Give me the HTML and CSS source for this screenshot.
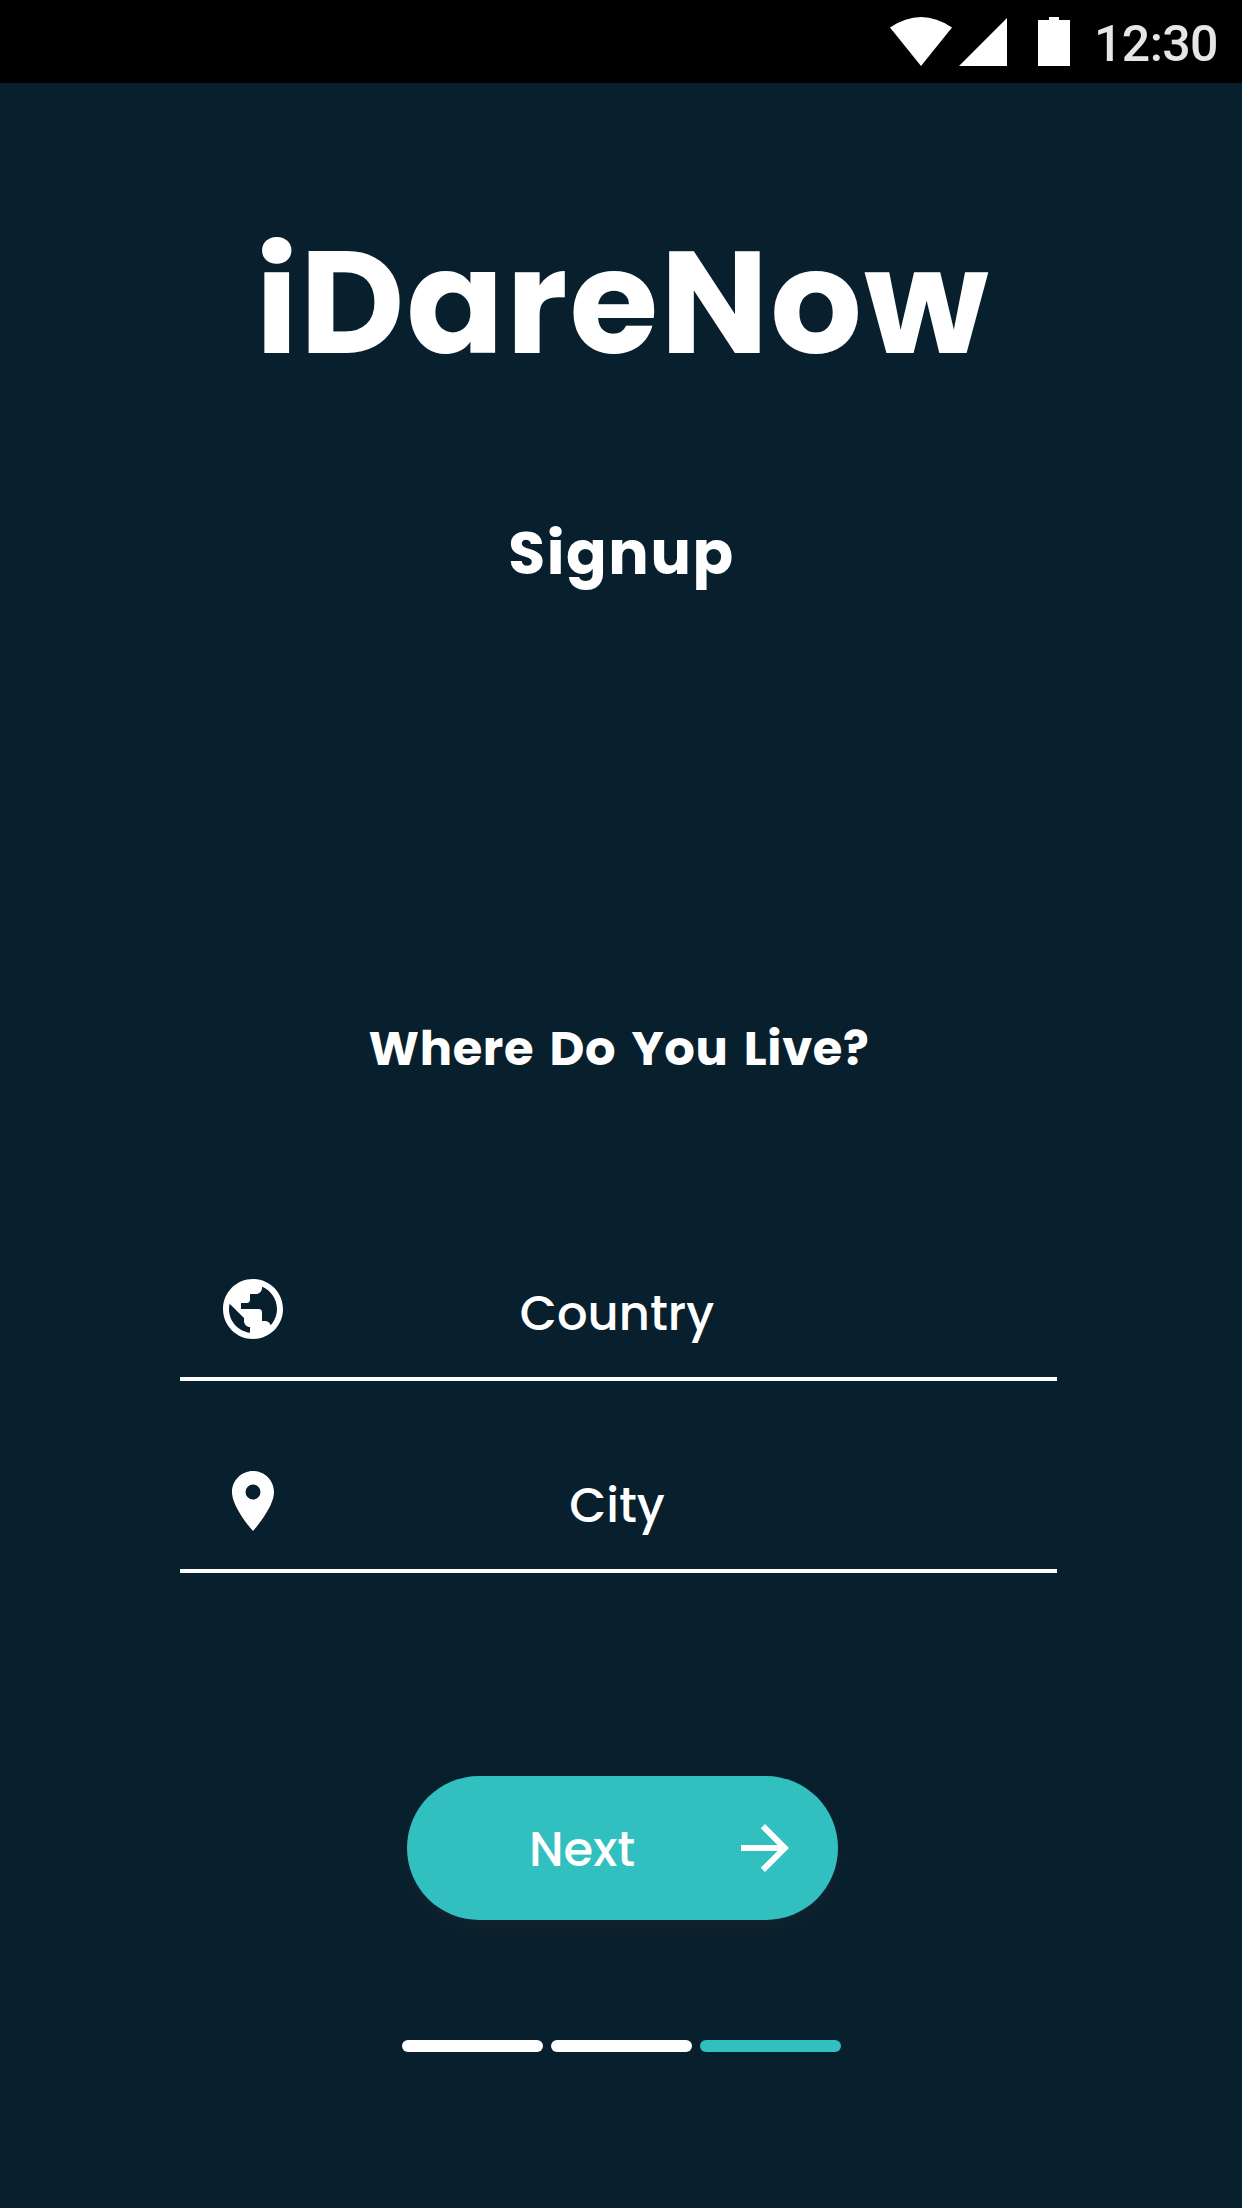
FILE: index.html
```
<!DOCTYPE html>
<html lang="en">
<head>
<meta charset="utf-8">
<title>iDareNow – Signup</title>
<link rel="stylesheet" href="styles.css">
</head>
<body>
<header class="status">
  <svg class="wifi" viewBox="0 0 62 49"><path d="M0 10.5Q31-10.5 62 10.5L31 49Z"/></svg>
  <svg class="signal" viewBox="0 0 48 48"><path d="M48 0V48H0Z"/></svg>
  <svg class="battery" viewBox="0 0 32 49"><path d="M11 0h10v3h11v46H0V3h11Z"/></svg>
  <span class="time">12:30</span>
</header>
<main class="screen">
  <h1 class="brand">iDareNow</h1>
  <h2 class="heading">Signup</h2>
  <h3 class="question">Where Do You Live?</h3>
  <form class="fields">
    <div class="field">
      <svg class="icon" viewBox="0 0 24 24"><path d="M12 2C6.48 2 2 6.48 2 12s4.480 10 10 10 10-4.480 10-10S17.520 2 12 2zm-1 17.930c-3.950-.49-7-3.850-7-7.930 0-.62.080-1.210.210-1.790L9 15v1c0 1.100.9 2 2 2v1.930zm6.900-2.540c-.26-.81-1-1.390-1.900-1.390h-1v-3c0-.55-.45-1-1-1H8v-2h2c.55 0 1-.45 1-1V7h2c1.100 0 2-.9 2-2v-.41c2.930 1.190 5 4.060 5 7.410 0 2.080-.8 3.970-2.100 5.390z"/></svg>
      <span class="label">Country</span>
    </div>
    <div class="field">
      <svg class="icon" viewBox="0 0 24 24"><path d="M12 2C8.130 2 5 5.130 5 9c0 5.250 7 13 7 13s7-7.750 7-13c0-3.870-3.130-7-7-7zm0 9.500a2.500 2.500 0 1 1 0-5 2.500 2.500 0 0 1 0 5z"/></svg>
      <span class="label">City</span>
    </div>
  </form>
  <button class="next" type="button">
    <span class="next-label">Next</span>
    <svg class="arrow" viewBox="0 0 24 24"><path d="M12 4l-1.410 1.410L16.170 11H4v2h12.170l-5.580 5.590L12 20l8-8z"/></svg>
  </button>
  <div class="steps"><i class="step"></i><i class="step"></i><i class="step active"></i></div>
</main>
</body>
</html>
```
FILE: styles.css
```
* { box-sizing: border-box; }
body {
  margin: 0;
  width: 1242px;
  height: 2208px;
  background: #08202d;
  color: #fff;
  font-family: Poppins, Inter, "Open Sans", sans-serif;
  overflow: hidden;
}
svg { display: block; fill: currentColor; flex: none; }
.status {
  height: 83px;
  padding: 17px 24px 0 0;
  background: #000;
  display: flex;
  justify-content: flex-end;
  align-items: flex-start;
}
.wifi { width: 62px; height: 49px; margin-right: 7px; }
.signal { width: 48px; height: 48px; margin: 1px 31px 0 0; }
.battery { width: 32px; height: 49px; margin-right: 24px; }
.time {
  width: 124px;
  color: #e6e6e6;
  font: 500 50px/54px Roboto, sans-serif;
  letter-spacing: -.6px;
  white-space: nowrap;
}
.screen { display: flex; flex-direction: column; align-items: center; }
h1, h2, h3 { margin: 0; white-space: nowrap; }
.brand { margin: 130px 0 0 4px; font-size: 144px; line-height: 180px; font-weight: 700; letter-spacing: 1.9px; }
.heading { margin: 115px 0 0 1px; font-size: 60px; line-height: 90px; font-weight: 700; letter-spacing: 1.6px; }
.question { margin: 416px 4px 0 0; font-size: 48px; line-height: 70px; font-weight: 700; letter-spacing: .6px; word-spacing: 4.6px; }
.fields { width: 877px; margin: 189px 5px 0 0; display: flex; flex-direction: column; gap: 84px; }
.field {
  height: 108px;
  display: grid;
  grid-template-columns: 72px 1fr 76px;
  padding: 0 36px 0 37px;
  border-bottom: 4px solid #fff;
}
.icon { width: 72px; height: 72px; }
.label { font-size: 48px; line-height: 81px; font-weight: 500; text-align: center; white-space: nowrap; }
.next {
  width: 431px;
  height: 144px;
  margin: 203px 0 0 3px;
  padding: 0 37px 0 122px;
  border: 0;
  border-radius: 72px;
  background: #32bfc0;
  color: #fff;
  font: inherit;
  display: flex;
  align-items: center;
  justify-content: space-between;
  box-shadow: 0 9px 18px rgba(60, 50, 50, .16);
}
.next-label { font-size: 48px; line-height: 70px; font-weight: 500; padding-top: 4px; }
.arrow { width: 72px; height: 72px; }
.steps { display: flex; gap: 8px; margin-top: 120px; }
.step { width: 141px; height: 12px; border-radius: 6px; background: #fff; }
.active { background: #32bfc0; }
```
